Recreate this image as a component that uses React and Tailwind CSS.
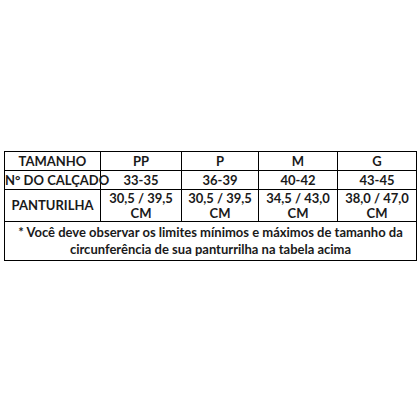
import React from 'react';

const COLS = [
  { label: 'PP', calcado: '33-35', pant: ['30,5 / 39,5', 'CM'] },
  { label: 'P', calcado: '36-39', pant: ['30,5 / 39,5', 'CM'] },
  { label: 'M', calcado: '40-42', pant: ['34,5 / 43,0', 'CM'] },
  { label: 'G', calcado: '43-45', pant: ['38,0 / 47,0', 'CM'] },
];

const cell = 'border border-black text-center align-middle p-0';

export default function App() {
  return (
    <div
      className="w-[420px] h-[420px] bg-white pt-[151px] pl-[4px]"
      style={{ fontFamily: 'Lato, "Liberation Sans", sans-serif' }}
    >
      <table className="border-collapse w-[412px] table-fixed text-[#1a1a1a] font-bold text-[13px]">
        <colgroup>
          <col className="w-[96px]" />
          <col className="w-[81px]" />
          <col className="w-[77px]" />
          <col className="w-[79px]" />
          <col className="w-[79px]" />
        </colgroup>
        <tbody>
          <tr className="h-[19px] leading-[16px]">
            <td className={cell}>TAMANHO</td>
            {COLS.map((c) => (
              <td key={c.label} className={cell}>{c.label}</td>
            ))}
          </tr>
          <tr className="h-[19px] leading-[16px]">
            <td className={cell + ' whitespace-nowrap'}>N° DO CALÇADO</td>
            {COLS.map((c) => (
              <td key={c.label} className={cell}>{c.calcado}</td>
            ))}
          </tr>
          <tr className="h-[32px] leading-[15px]">
            <td className={cell}>PANTURILHA</td>
            {COLS.map((c) => (
              <td key={c.label} className={cell}>
                {c.pant[0]}
                <br />
                {c.pant[1]}
              </td>
            ))}
          </tr>
          <tr className="h-[39px] leading-[17px]">
            <td colSpan={5} className={cell}>
              * Você deve observar os limites mínimos e máximos de tamanho da
              <br />
              circunferência de sua panturrilha na tabela acima
            </td>
          </tr>
        </tbody>
      </table>
    </div>
  );
}
